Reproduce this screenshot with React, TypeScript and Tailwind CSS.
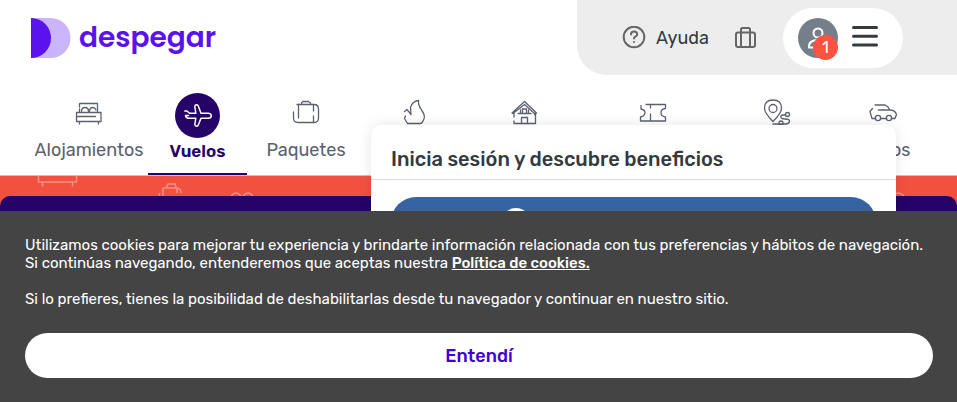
import type { ReactNode } from "react";

function Icon({ children, className = "" }: { children: ReactNode; className?: string }) {
  return (
    <svg
      width="28"
      height="28"
      viewBox="0 0 28 28"
      fill="none"
      stroke="currentColor"
      strokeWidth="1.3"
      strokeLinecap="round"
      strokeLinejoin="round"
      aria-hidden="true"
      className={className}
    >
      {children}
    </svg>
  );
}

const tabs: { id: string; label?: string; icon: ReactNode; active?: boolean }[] = [
  {
    id: "alojamientos",
    label: "Alojamientos",
    icon: (
      <>
        <path d="M4.500 8V5Q4.500 4.500 5 4.500H22.500V12.500" />
        <path d="M4.500 10V12.500" />
        <path d="M6.500 12.500Q6.500 8.500 10 8.500Q13.500 8.500 13.500 12.500M14.500 12.500Q14.500 8.500 18 8.500Q20 8.500 21 11" />
        <path d="M1.500 13.500H26V22.500H1.500ZM1.500 17.500H20.500M4.500 22.500V25M23.500 22.500V25" />
      </>
    ),
  },
  {
    id: "vuelos",
    label: "Vuelos",
    active: true,
    icon: (
      <path
        strokeWidth="1.500"
        d="M0.700 9H3L5.500 11.200H11.800L10.800 4.500Q11 2.800 12.500 2.800Q14 2.800 14.500 4.500L17 11.200H24.500Q27.300 11.500 27.300 13.700Q27.300 16 24.500 16.200H17L14.500 22.500Q14 24.200 12.500 24.200Q11 24.200 10.800 22.500L11.800 16.200H4.500Q2 16 1.500 13.500H4.500"
      />
    ),
  },
  {
    id: "paquetes",
    label: "Paquetes",
    icon: (
      <>
        <path d="M5 5.500H22Q26.500 5.500 26.500 10V19Q26.500 23.500 22 23.500H6Q1.500 23.500 1.500 19V13" />
        <path d="M6.500 5.500V19M21.500 5.500V12M21.500 17V23.500M9.500 5V4L11 2.500H16.500L18.500 4V5" />
      </>
    ),
  },
  {
    id: "ofertas",
    icon: (
      <path d="M4.500 12.500L7 10.500L11 15.500L10.500 8.500Q12 2.500 18.500 1.500Q18 6 21.500 11Q26 17 23.500 21Q22 24.500 20.500 24.500H7.500L4.500 19.500L5.500 17" />
    ),
  },
  {
    id: "alquileres",
    icon: (
      <>
        <path d="M2 14L14.500 2.500L26.500 14L24.500 15.500M4 14.500V18M4 22V24.500H25.500V13M3 14.500L14.500 5.500L24.500 14.500" />
        <path d="M11.500 24.500V18.500H17.500V24.500M8 14.500H21M12.500 14V10H16.500V14M10.500 14V11M18.500 14V11" />
      </>
    ),
  },
  {
    id: "actividades",
    icon: (
      <path d="M7 5.500H26.500V9.500Q22 10 22 13.500Q22 17.500 26.500 18V22H1.500V18Q6 17 6 13.500Q6 11 2 10V6.500M11.500 5.500V9M11.500 15V22" />
    ),
  },
  {
    id: "traslados",
    icon: (
      <>
        <path d="M10 22.500Q1.500 14 1.500 9Q1.500 1 10 1Q18.500 1 18.500 9Q18.500 14 10 22.500ZM10 25H16" />
        <circle cx="10" cy="9.500" r="4" />
        <circle cx="24.500" cy="15.500" r="2" />
        <path d="M22 16H19.500Q17.500 16.500 18 18.500Q18.500 20 22 20Q27 20 26.500 22.500Q26 25 22 25H16" />
        <circle cx="18" cy="24" r="2" />
      </>
    ),
  },
  {
    id: "carros",
    label: "Carros",
    icon: (
      <>
        <path d="M6 6H16Q19 7 21 11Q26 11 27.500 15.500L26 19.500H23M3.500 9.500L1 12.500L3 19.500H6M11.500 19.500H17M9.500 11H21" />
        <circle cx="9" cy="19" r="2.600" />
        <circle cx="20" cy="19" r="2.600" />
      </>
    ),
  },
];

function Logo() {
  return (
    <a href="#inicio" aria-label="despegar" className="mt-[18px] ml-[31px] flex h-10 items-center gap-2">
      <svg width="40" height="40" viewBox="0 0 40 40" aria-hidden="true">
        <path d="M0 0H19.500A20 20 0 0 1 19.500 40H0Z" fill="#cbb5fa" />
        <path d="M0 0A20 20 0 0 1 0 40Z" fill="#5a12ee" />
      </svg>
      <span className="font-['Poppins','Inter',sans-serif] text-[28px] leading-[36px] font-semibold text-[#5a12ee] [font-feature-settings:'cv11']">
        despegar
      </span>
    </a>
  );
}

function HeaderActions() {
  return (
    <div className="flex h-[75px] w-[380px] items-start rounded-bl-[30px] bg-[#ededed] pt-2 pr-[54px] pl-[45px]">
      <a href="#ayuda" className="flex h-[60px] items-center gap-2.5 text-lg text-[#333a40]">
        <svg width="24" height="24" viewBox="0 0 24 24" fill="none" stroke="#666" strokeWidth="2" strokeLinecap="round" aria-hidden="true">
          <circle cx="12" cy="11" r="10.300" />
          <path d="M9 8.500Q9 5.500 12 5.500Q15.200 5.500 15.200 8.300Q15.200 10 13.300 10.700Q12 11.200 12 12.500M12 16V16.100" />
        </svg>
        Ayuda
      </a>
      <button type="button" aria-label="Mis viajes" className="ml-6 flex h-[60px] items-center">
        <svg width="24" height="24" viewBox="0 0 24 24" fill="none" stroke="#666" strokeWidth="2" aria-hidden="true">
          <rect x="3" y="6.500" width="19" height="14.500" rx="2" />
          <path d="M8 21V3.500Q8 2 9.500 2H15.500Q17 2 17 3.500V21" />
        </svg>
      </button>
      <div className="ml-auto flex h-[60px] w-[120px] items-center gap-[13px] rounded-full bg-white pl-[15px]">
        <button type="button" aria-label="Mi cuenta" className="relative size-10 rounded-full bg-[#757f8a]">
          <svg width="40" height="40" viewBox="0 0 40 40" fill="none" stroke="white" strokeWidth="2" strokeLinejoin="round" aria-hidden="true">
            <circle cx="20" cy="15" r="4.500" />
            <path d="M11 29.500Q10.500 22 20 22Q29.500 22 29 29.500Z" />
          </svg>
          <span className="absolute top-[17px] right-0 flex size-[25px] items-center justify-center rounded-full bg-[#ff5340] text-base text-white">
            1
          </span>
        </button>
        <button type="button" aria-label="Menú">
          <svg width="28" height="28" viewBox="0 0 28 28" stroke="#333a40" strokeWidth="3" strokeLinecap="round" aria-hidden="true">
            <path d="M2.500 3.500H25.500M2.500 12.200H25.500M2.500 21H25.500" />
          </svg>
        </button>
      </div>
    </div>
  );
}

function Products() {
  return (
    <nav className="mt-[18px] grid h-[82px] grid-cols-[118fr_99fr_118fr_98fr_122fr_136fr_112fr_100fr] pr-6 pl-[30px]">
      {tabs.map((tab) =>
        tab.active ? (
          <a key={tab.id} href={"#" + tab.id} aria-current="page" className="flex flex-col items-center rounded-t-sm border-b-2 border-[#260369] text-[#260369]">
            <span className="flex size-[45px] items-center justify-center rounded-full bg-[#260369] text-white">
              <Icon>{tab.icon}</Icon>
            </span>
            <span className="text-[17px] leading-[26px] font-semibold">{tab.label}</span>
          </a>
        ) : (
          <a
            key={tab.id}
            href={"#" + tab.id}
            aria-label={tab.label ?? tab.id}
            className="flex flex-col items-center pt-1.5 text-[#5b616e]"
          >
            <Icon>{tab.icon}</Icon>
            {tab.label && <span className="mt-2 text-lg leading-[30px]">{tab.label}</span>}
          </a>
        ),
      )}
    </nav>
  );
}

function Hero() {
  return (
    <div className="relative flex flex-1 flex-col border-t border-[#c4c4c4] bg-[#f25140] pt-5">
      <svg className="absolute top-0 left-0" width="260" height="20" fill="none" stroke="#f79186" strokeWidth="1.500" aria-hidden="true">
        <path d="M38.500 0V6H76.500V0M42.500 6V10.500M72.500 6V10.500" />
        <path d="M159.500 20V17M163 12V20M162.500 12H176Q181 12 181 17M177 12V17M166 12L168 8H175L176 11" />
        <path d="M231 20Q236 14 241 20M243 20Q248 14 253 20" />
      </svg>
      <svg className="absolute top-0 right-[52px]" width="12" height="20" fill="none" stroke="#f79186" strokeWidth="1.500" aria-hidden="true">
        <path d="M0 20Q5 14 11 20" />
      </svg>
      <div className="relative flex-1 rounded-t-[10px] bg-[#260369]" />
    </div>
  );
}

function LoginPanel() {
  return (
    <section className="absolute top-[125px] right-[61px] w-[525px] rounded-[10px] bg-white pb-5 shadow-[0_0_14px_rgba(0,0,0,0.1)]">
      <h2 className="border-b border-[#d5dce4] px-5 pt-5 pb-1.5 text-xl leading-7 font-medium text-[#333a40]">
        Inicia sesión y descubre beneficios
      </h2>
      <div className="px-5 pt-[17px]">
        <button type="button" aria-label="Facebook" className="flex h-[50px] w-full items-center rounded-full bg-[#3664a2] pl-28">
          <svg width="26" height="28" viewBox="0 0 26 28" aria-hidden="true">
            <circle cx="13" cy="14" r="14" fill="white" />
            <path d="M11 26V16H8V12H11V9Q11 4.500 16 4.500H18V8H16Q14.500 8 14.500 10V12H18L17.500 16H14.500V26Z" fill="#3664a2" />
          </svg>
        </button>
      </div>
    </section>
  );
}

function CookieBanner() {
  return (
    <aside className="fixed inset-x-0 bottom-0 bg-[#444] pt-[25px] pr-6 pb-6 pl-[25px] text-white">
      <p className="text-[15px] leading-[18px]">
        Utilizamos cookies para mejorar tu experiencia y brindarte información relacionada con tus preferencias y hábitos de navegación.
        <br />
        Si continúas navegando, entenderemos que aceptas nuestra{" "}
        <a href="#cookies" className="font-medium underline">Política de cookies.</a>
      </p>
      <p className="mt-[18px] text-[15px] leading-[18px]">
        Si lo prefieres, tienes la posibilidad de deshabilitarlas desde tu navegador y continuar en nuestro sitio.
      </p>
      <button type="button" className="mt-[25px] h-[45px] w-full rounded-full bg-white text-lg font-medium text-[#4300d2]">
        Entendí
      </button>
    </aside>
  );
}

export default function App() {
  return (
    <div className="relative flex min-h-screen flex-col bg-white font-['Rubik','Roboto',sans-serif]">
      <header className="flex items-start justify-between">
        <Logo />
        <HeaderActions />
      </header>
      <Products />
      <Hero />
      <LoginPanel />
      <CookieBanner />
    </div>
  );
}
